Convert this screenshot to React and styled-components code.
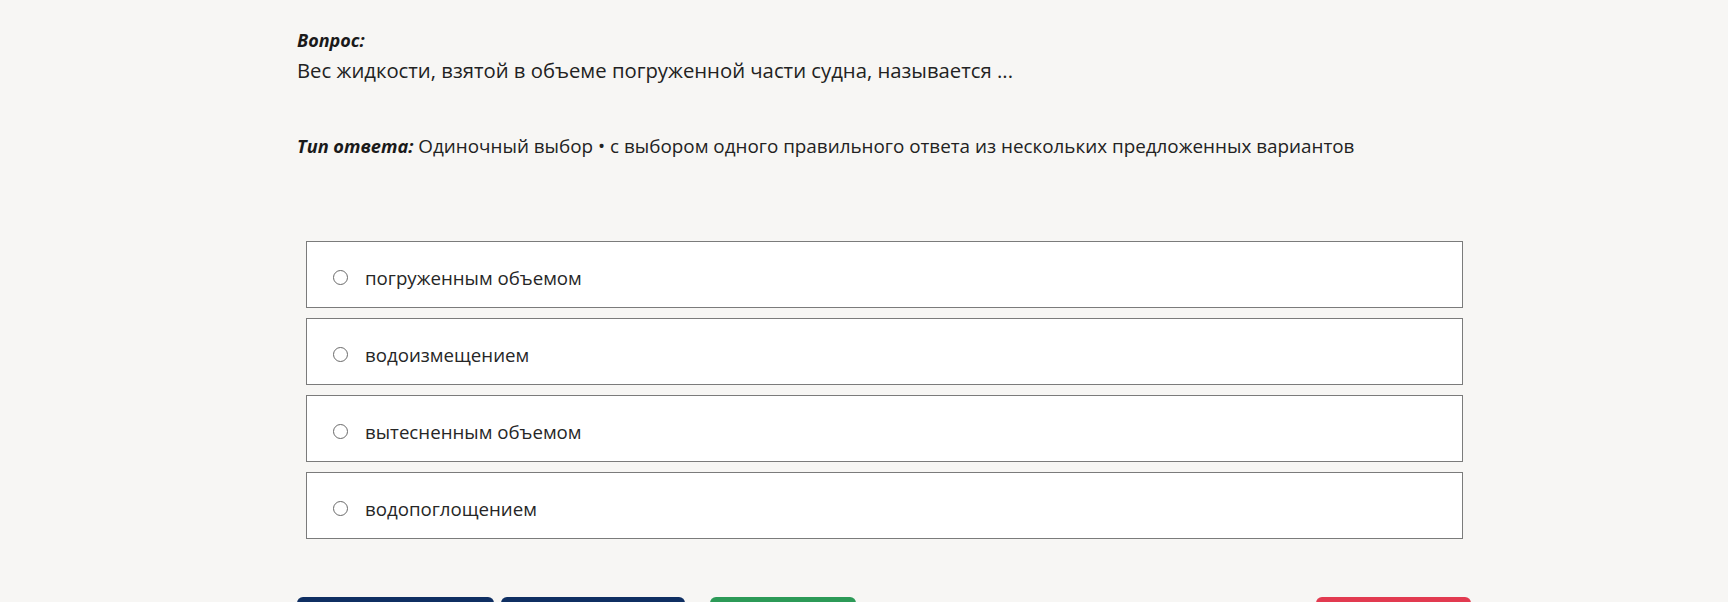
import React from 'react';
import styled, { createGlobalStyle } from 'styled-components';

const GlobalStyle = createGlobalStyle`
  html, body {
    margin: 0;
    padding: 0;
    background: #f7f6f4;
  }
  body {
    font-family: "Open Sans", "Noto Sans", sans-serif;
    color: #222;
    overflow: hidden;
  }
`;

const Page = styled.div`
  padding: 27px 0 0 297px;
  width: 1175px;
`;

const Label = styled.div`
  font-size: 18px;
  font-weight: 700;
  font-style: italic;
  line-height: 26px;
  color: #1a1a1a;
`;

const QuestionText = styled.div`
  font-size: 20.3px;
  line-height: 30px;
  margin-top: 2px;
`;

const TypeLine = styled.div`
  font-size: 18.85px;
  line-height: 28px;
  margin-top: 47px;
  b {
    font-size: 18.2px;
    font-weight: 700;
    font-style: italic;
    color: #1a1a1a;
  }
`;

const Options = styled.div`
  display: flex;
  flex-direction: column;
  gap: 10px;
  margin: 81px 0 0 9px;
  width: 1157px;
`;

const Option = styled.label`
  display: flex;
  align-items: center;
  gap: 17px;
  box-sizing: border-box;
  height: 67px;
  padding: 6px 0 0 26px;
  background: #fff;
  border: 1px solid #7b7b7b;
  font-size: 18.7px;
  color: #262626;
  cursor: pointer;
`;

const Radio = styled.span`
  width: 13px;
  height: 13px;
  border-radius: 50%;
  border: 1px solid #6a6a6a;
  background: #fff;
  flex-shrink: 0;
`;

const Actions = styled.div`
  display: flex;
  gap: 7px;
  margin-top: 58px;
`;

const Button = styled.button`
  height: 40px;
  width: ${p => p.$w}px;
  margin-left: ${p => p.$ml || 0}px;
  padding: 12px 6px 0;
  border: none;
  border-radius: 6px;
  background: ${p => p.$bg};
  color: #fff;
  font-family: inherit;
  font-size: 16px;
  line-height: 20px;
`;

const answers = [
  'погруженным объемом',
  'водоизмещением',
  'вытесненным объемом',
  'водопоглощением',
];

export default function App() {
  return (
    <>
      <GlobalStyle />
      <Page>
        <Label>Вопрос:</Label>
        <QuestionText>Вес жидкости, взятой в объеме погруженной части судна, называется ...</QuestionText>
        <TypeLine>
          <b>Тип ответа:</b> Одиночный выбор • с выбором одного правильного ответа из нескольких предложенных вариантов
        </TypeLine>
        <Options>
          {answers.map(a => (
            <Option key={a}>
              <Radio />
              {a}
            </Option>
          ))}
        </Options>
        <Actions>
          <Button $bg="#0f2f62" $w={197}>Назад</Button>
          <Button $bg="#0f2f62" $w={184}>Далее</Button>
          <Button $bg="#2c9a57" $w={146} $ml={18}>Ответить</Button>
          <Button $bg="#e23a50" $w={155} $ml={453}>Завершить</Button>
        </Actions>
      </Page>
    </>
  );
}
